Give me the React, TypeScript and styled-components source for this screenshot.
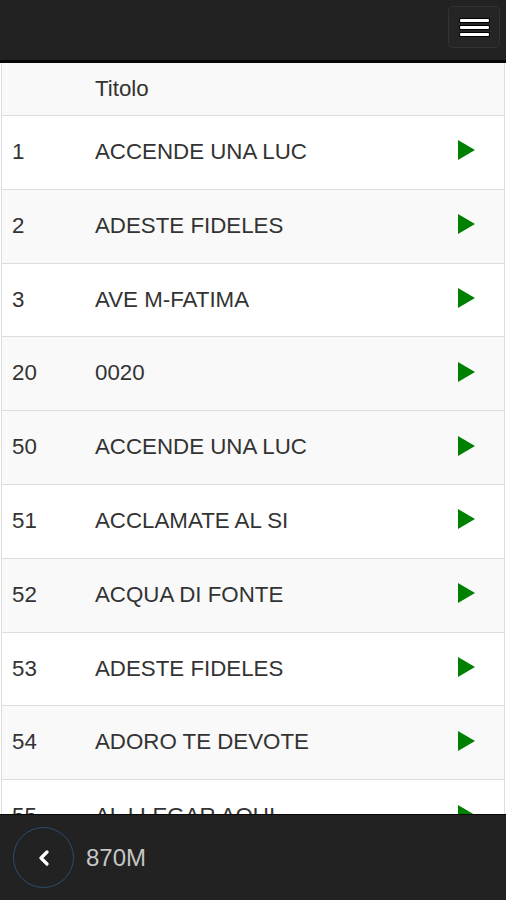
import React from "react";
import styled, { createGlobalStyle } from "styled-components";

const GlobalStyle = createGlobalStyle`
  html, body { margin: 0; padding: 0; background: #fff; }
  body { font-family: "Liberation Sans", Arial, sans-serif; }
  * { box-sizing: border-box; }
`;

const Page = styled.div`
  display: flex;
  flex-direction: column;
  height: 100vh;
  overflow: hidden;
`;

const TopBar = styled.header`
  flex: none;
  height: 63px;
  background: #222;
  border-bottom: 3px solid #080808;
  display: flex;
  justify-content: flex-end;
  align-items: flex-start;
  padding: 6px 6px 0 0;
`;

const MenuButton = styled.button`
  width: 52px;
  height: 42px;
  background: #252525;
  border: 1px solid #333;
  border-radius: 5px;
  display: flex;
  flex-direction: column;
  justify-content: center;
  align-items: center;
  gap: 4px;
  padding: 0;
`;

const Bar = styled.span`
  display: block;
  width: 29px;
  height: 3px;
  border-radius: 1px;
  background: #fff;
  box-shadow: 0 0 0 1px #000;
`;

const Scroller = styled.main`
  flex: 1;
  overflow: hidden;
  padding: 0 1px;
`;

const Table = styled.div`
  border-left: 1px solid #ddd;
  border-right: 1px solid #ddd;
`;

const Row = styled.div<{ $shade?: boolean; $head?: boolean }>`
  display: grid;
  grid-template-columns: 83px 1fr 56px;
  align-items: center;
  height: ${(p) => (p.$head ? "52px" : "73.8px")};
  background: ${(p) => (p.$shade ? "#f9f9f9" : "#fff")};
  border-top: ${(p) => (p.$head ? "none" : "1px solid #ddd")};
  color: #333;
  font-size: 22.3px;
  line-height: 1.2;
`;

const Cell = styled.div`
  padding-left: 10px;
  white-space: nowrap;
  overflow: hidden;
`;

const PlayCell = styled.div`
  padding-left: 10px;
  display: flex;
  align-items: center;
  height: 100%;
  padding-bottom: 4px;
`;

const BottomBar = styled.footer`
  flex: none;
  height: 86px;
  background: #222;
  border-top: 1px solid #080808;
  display: flex;
  align-items: center;
  padding-left: 13px;
  gap: 12px;
`;

const BackButton = styled.button`
  width: 61px;
  height: 61px;
  border-radius: 50%;
  border: 1.5px solid #2b4d6c;
  background: transparent;
  display: flex;
  align-items: center;
  justify-content: center;
  padding: 0;
`;

const Label = styled.span`
  color: #c6c6c6;
  font-size: 24px;
  font-family: "Liberation Sans", Arial, sans-serif;
`;

const songs: [string, string][] = [
  ["1", "ACCENDE UNA LUC"],
  ["2", "ADESTE FIDELES"],
  ["3", "AVE M-FATIMA"],
  ["20", "0020"],
  ["50", "ACCENDE UNA LUC"],
  ["51", "ACCLAMATE AL SI"],
  ["52", "ACQUA DI FONTE"],
  ["53", "ADESTE FIDELES"],
  ["54", "ADORO TE DEVOTE"],
  ["55", "AL LLEGAR AQUI"],
];

const PlayIcon = () => (
  <svg width="17" height="20" viewBox="0 0 17 20">
    <polygon points="0,0 17,10 0,20" fill="#008000" />
  </svg>
);

export default function App() {
  return (
    <Page>
      <GlobalStyle />
      <TopBar>
        <MenuButton aria-label="menu">
          <Bar />
          <Bar />
          <Bar />
        </MenuButton>
      </TopBar>
      <Scroller>
        <Table>
          <Row $head $shade>
            <Cell />
            <Cell>Titolo</Cell>
            <Cell />
          </Row>
          {songs.map(([n, t]) => (
            <Row key={n} $shade={parseInt(n, 10) % 2 === 0}>
              <Cell>{n}</Cell>
              <Cell>{t}</Cell>
              <PlayCell>
                <PlayIcon />
              </PlayCell>
            </Row>
          ))}
        </Table>
      </Scroller>
      <BottomBar>
        <BackButton aria-label="back">
          <svg width="14" height="16" viewBox="0 0 14 16">
            <polyline
              points="10,2 4,8 10,14"
              fill="none"
              stroke="#fff"
              strokeWidth="3.2"
              strokeLinecap="round"
              strokeLinejoin="round"
            />
          </svg>
        </BackButton>
        <Label>870M</Label>
      </BottomBar>
    </Page>
  );
}
